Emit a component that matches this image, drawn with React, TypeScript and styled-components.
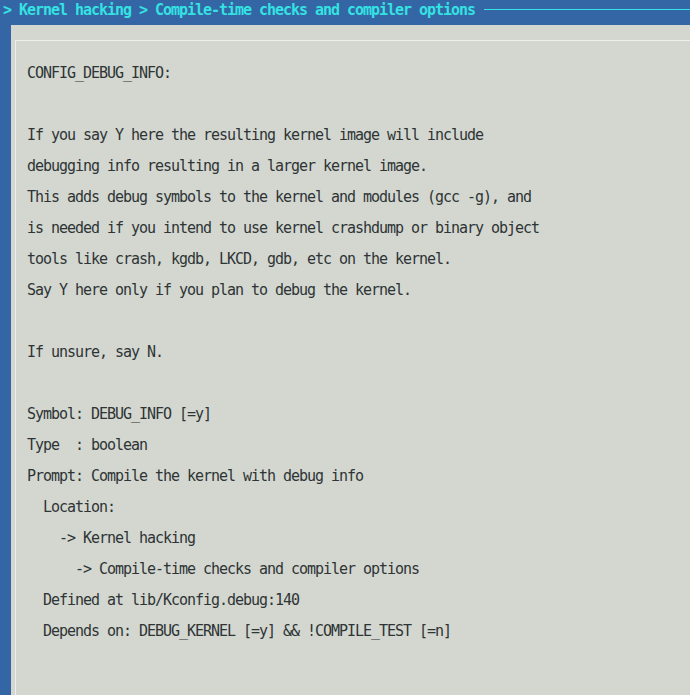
import React from 'react';
import styled, { createGlobalStyle } from 'styled-components';

const GlobalStyle = createGlobalStyle`
  html, body {
    margin: 0;
    padding: 0;
    background: #3465a4;
    overflow: hidden;
  }
`;

const helpLines = [
  'CONFIG_DEBUG_INFO:',
  '',
  'If you say Y here the resulting kernel image will include',
  'debugging info resulting in a larger kernel image.',
  'This adds debug symbols to the kernel and modules (gcc -g), and',
  'is needed if you intend to use kernel crashdump or binary object',
  'tools like crash, kgdb, LKCD, gdb, etc on the kernel.',
  'Say Y here only if you plan to debug the kernel.',
  '',
  'If unsure, say N.',
  '',
  'Symbol: DEBUG_INFO [=y]',
  'Type  : boolean',
  'Prompt: Compile the kernel with debug info',
  '  Location:',
  '    -> Kernel hacking',
  '      -> Compile-time checks and compiler options',
  '  Defined at lib/Kconfig.debug:140',
  '  Depends on: DEBUG_KERNEL [=y] && !COMPILE_TEST [=n]',
];

const Screen = styled.div`
  width: 690px;
  height: 695px;
  display: flex;
  flex-direction: column;
  background: #3465a4;
  font-family: 'DejaVu Sans Mono', 'Liberation Mono', monospace;
  font-size: 15px;
  letter-spacing: -1.03px;
`;

const TitleBar = styled.div`
  height: 25px;
  display: flex;
  align-items: flex-start;
  padding-left: 3px;
  box-sizing: border-box;
`;

const Title = styled.span`
  color: #34e2e2;
  font-weight: bold;
  line-height: 20px;
  white-space: pre;
`;

const TitleRule = styled.div`
  flex: 1;
  height: 1px;
  margin-top: 9px;
  margin-left: 9px;
  background: #34e2e2;
`;

const Panel = styled.div`
  flex: 1;
  margin-left: 11px;
  background: #d3d7cf;
  padding: 15px 0 0 4px;
  display: flex;
`;

const Frame = styled.div`
  flex: 1;
  border-top: 1px solid #eeeeec;
  border-left: 1px solid #eeeeec;
  padding: 17px 0 0 11px;
`;

const HelpText = styled.pre`
  margin: 0;
  font: inherit;
  color: #2e3436;
  line-height: 31px;
`;

export default function App() {
  return (
    <>
      <GlobalStyle />
      <Screen>
        <TitleBar>
          <Title>{'> Kernel hacking > Compile-time checks and compiler options'}</Title>
          <TitleRule />
        </TitleBar>
        <Panel>
          <Frame>
            <HelpText>{helpLines.join('\n')}</HelpText>
          </Frame>
        </Panel>
      </Screen>
    </>
  );
}
